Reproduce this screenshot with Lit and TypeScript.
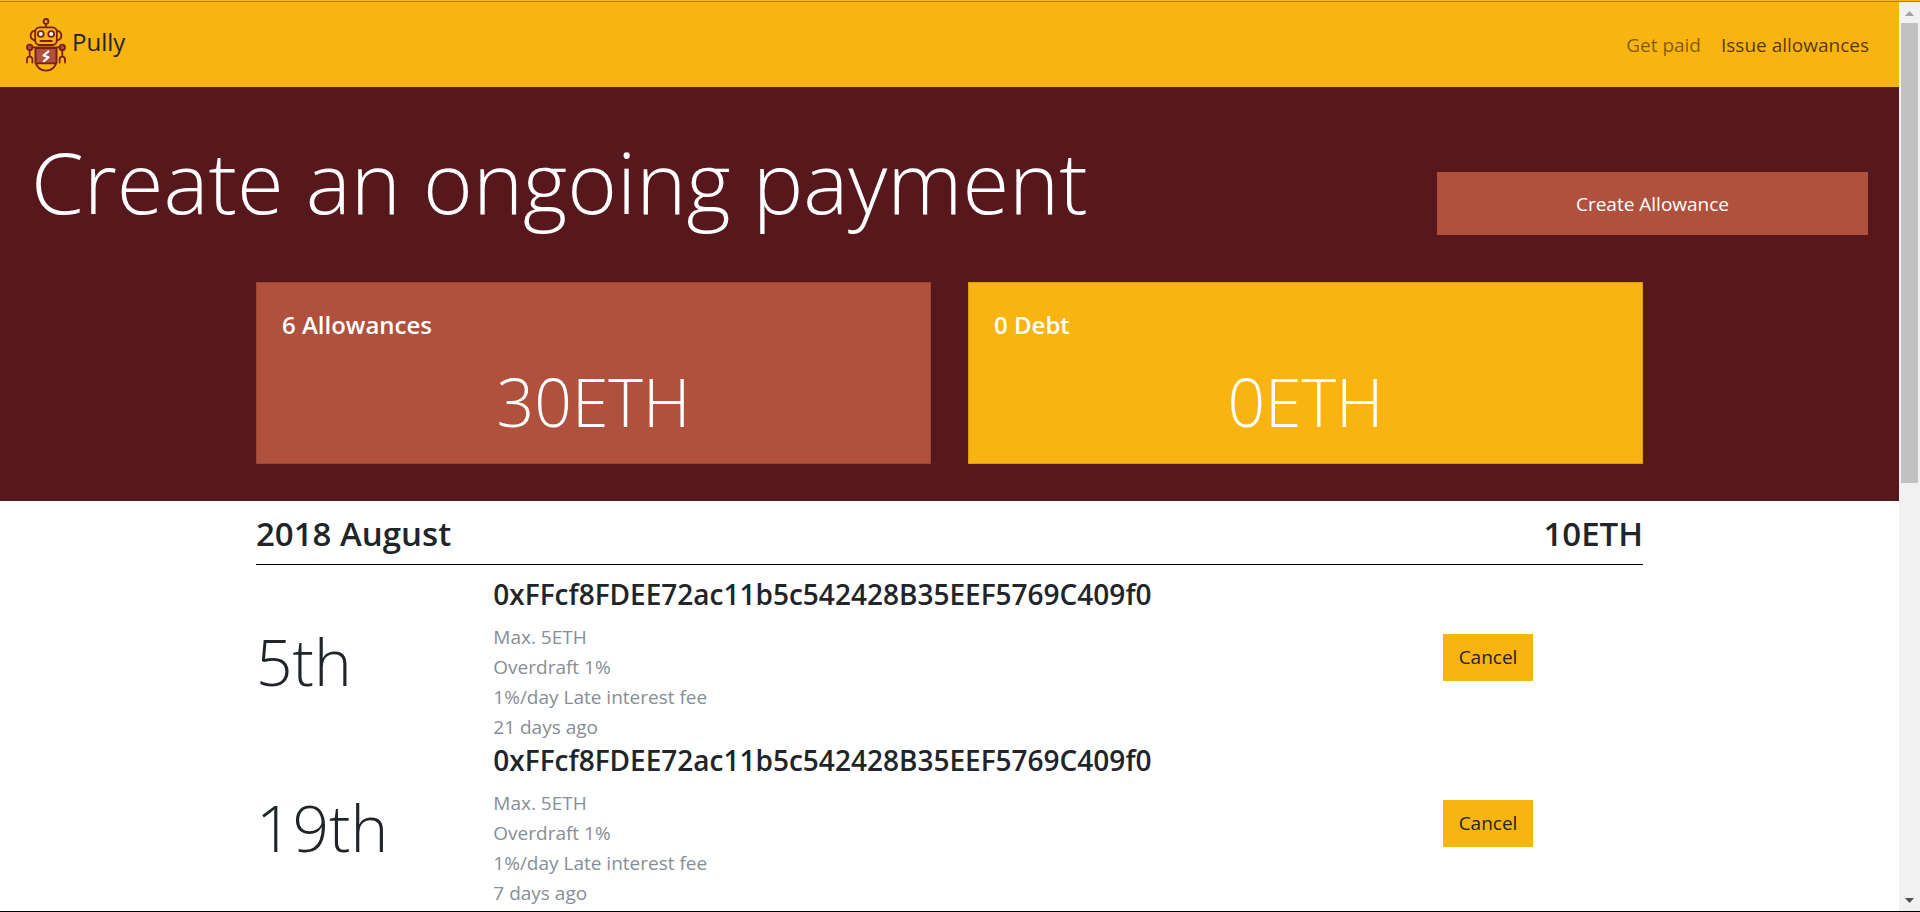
import { LitElement, html, css } from "lit";
import { customElement, property } from "lit/decorators.js";

const palette = css`
  :host {
    --gold: #f9b411;
    --wine: #56171d;
    --rust: #b0513d;
    --ink: #212529;
    --muted: #868e96;
    box-sizing: border-box;
  }
  * {
    box-sizing: border-box;
  }
`;

interface Allowance {
  day: string;
  address: string;
  max: string;
  overdraft: string;
  fee: string;
  when: string;
}

const ADDRESS = "0xFFcf8FDEE72ac11b5c542428B35EEF5769C409f0";

const ALLOWANCES: Allowance[] = [
  { day: "5th", address: ADDRESS, max: "Max. 5ETH", overdraft: "Overdraft 1%", fee: "1%/day Late interest fee", when: "21 days ago" },
  { day: "19th", address: ADDRESS, max: "Max. 5ETH", overdraft: "Overdraft 1%", fee: "1%/day Late interest fee", when: "7 days ago" },
];

@customElement("pully-logo")
export class PullyLogo extends LitElement {
  static styles = css`
    :host {
      display: block;
    }
    .robot {
      display: block;
      width: 40px;
      height: 54px;
    }
  `;

  render() {
    return html`
      <svg class="robot" viewBox="0 0 40 54" fill="none" stroke="#7a1f16" stroke-width="1.8" stroke-linecap="round" stroke-linejoin="round" aria-hidden="true">
        <circle cx="20" cy="3.4" r="2.4" />
        <path d="M20 6V9.2" />
        <rect x="9.2" y="9.4" width="21.6" height="17.6" rx="4.4" />
        <path d="M9 12.6C6.2 13.2 4.6 15.4 4.6 17.6S6.2 21.8 9 22.4" />
        <path d="M31 12.6C33.8 13.2 35.4 15.4 35.4 17.6S33.8 21.8 31 22.4" />
        <circle cx="14.8" cy="16" r="2.9" fill="#fff" />
        <circle cx="25.2" cy="16" r="2.9" fill="#fff" />
        <path d="M14.4 23H25.8" />
        <path d="M6 29.4H34" />
        <path d="M9.6 30V42C9.6 48.4 13.8 52.6 20 52.6S30.4 48.4 30.4 42V30" />
        <path d="M9.6 30H30.4V45.4H9.6Z" fill="#b0513d" />
        <path d="M22.4 33.4L17.4 37.6L22.6 39.2L17.8 43.2" stroke="#fff" stroke-width="2.1" />
        <circle cx="3.7" cy="29.4" r="2.7" fill="#b0513d" />
        <circle cx="36.3" cy="29.4" r="2.7" fill="#b0513d" />
        <path d="M3.7 32.6V38.6M1 44.6V41.4C1 39.6 2 38.6 3.7 38.6S6.4 39.6 6.4 41.4V44.6" />
        <path d="M36.3 32.6V38.6M33.6 44.6V41.4C33.6 39.6 34.6 38.6 36.3 38.6S39 39.6 39 41.4V44.6" />
      </svg>
    `;
  }
}

@customElement("summary-card")
export class SummaryCard extends LitElement {
  @property() heading = "";
  @property() amount = "";
  @property({ reflect: true }) tone = "rust";

  static styles = [
    palette,
    css`
      :host {
        display: block;
        padding: 24px 25px 20px;
        border: 1px solid rgba(0, 0, 0, 0.125);
        color: #fff;
        background: var(--rust);
      }
      :host([tone="gold"]) {
        background: var(--gold);
      }
      .heading {
        margin: 0;
        font-size: 24px;
        font-weight: 600;
        line-height: 36px;
      }
      .amount {
        margin: 16px 0 0;
        font-size: 66px;
        font-weight: 300;
        line-height: 84px;
        text-align: center;
      }
    `,
  ];

  render() {
    return html`
      <h2 class="heading">${this.heading}</h2>
      <p class="amount">${this.amount}</p>
    `;
  }
}

@customElement("app-root")
export class AppRoot extends LitElement {
  static styles = [
    palette,
    css`
      :host {
        display: flex;
        flex-direction: column;
        height: 100vh;
        background: #fff;
        color: var(--ink);
        font-family: "Open Sans", "Noto Sans", sans-serif;
        font-size: 19px;
        line-height: 30px;
        border-bottom: 1px solid #000;
      }
      .edge {
        height: 2px;
        background: var(--gold);
        border-bottom: 1px solid #b07f0c;
      }
      .window {
        flex: 1;
        min-height: 0;
        display: flex;
      }
      .page {
        flex: 1;
        min-width: 0;
        overflow-y: auto;
        scrollbar-width: none;
      }
      .navbar {
        display: flex;
        justify-content: space-between;
        align-items: center;
        height: 85px;
        padding: 0 30px 0 26px;
        background: var(--gold);
      }
      .brand {
        display: flex;
        align-items: center;
        gap: 6px;
        color: #212529;
        text-decoration: none;
        font-size: 24px;
      }
      .name {
        padding-bottom: 6px;
      }
      .links {
        display: flex;
        gap: 20px;
      }
      .link {
        color: rgba(0, 0, 0, 0.7);
        text-decoration: none;
      }
      .link.dim {
        color: rgba(0, 0, 0, 0.5);
      }
      .hero {
        padding: 37px 0;
        background: var(--wine);
        color: #fff;
      }
      .intro {
        display: flex;
        justify-content: space-between;
        align-items: flex-start;
        padding: 0 31px;
        margin-bottom: 44px;
      }
      .title {
        margin: 0;
        font-size: 85px;
        font-weight: 300;
        line-height: 114px;
      }
      .create {
        width: 431px;
        height: 63px;
        margin-top: 48px;
        border: 0;
        background: var(--rust);
        color: #fff;
        font: inherit;
      }
      .container {
        max-width: 1387px;
        margin: 0 auto;
      }
      .cards {
        display: grid;
        grid-template-columns: 1fr 1fr;
        gap: 37px;
      }
      .month {
        display: flex;
        justify-content: space-between;
        padding: 12px 0 9px;
        border-bottom: 1px solid #000;
        margin-bottom: 11px;
      }
      .month-text {
        margin: 0;
        font-size: 33px;
        font-weight: 600;
        line-height: 42px;
      }
      .row {
        display: grid;
        grid-template-columns: repeat(12, 1fr);
        column-gap: 37px;
        align-items: center;
      }
      .day {
        grid-column: span 2;
        padding-top: 6px;
        font-size: 64px;
        font-weight: 300;
        line-height: 84px;
      }
      .details {
        grid-column: span 8;
      }
      .address {
        margin: 0 0 10px;
        font-size: 28px;
        font-weight: 600;
        line-height: 36px;
      }
      .line {
        margin: 0;
        color: var(--muted);
      }
      .action {
        grid-column: span 2;
        padding-bottom: 4px;
      }
      .cancel {
        height: 47px;
        padding: 0 16px;
        border: 0;
        background: var(--gold);
        color: var(--ink);
        font: inherit;
      }
      .scrollbar {
        width: 21px;
        display: flex;
        flex-direction: column;
        background: #f1f1f1;
      }
      .arrow {
        display: block;
        width: 21px;
        height: 21px;
      }
      .track {
        flex: 1;
        padding: 0 2px;
      }
      .thumb {
        height: 53%;
        background: #c1c1c1;
      }
    `,
  ];

  private renderAllowance(a: Allowance) {
    return html`
      <article class="row">
        <div class="day">${a.day}</div>
        <div class="details">
          <h3 class="address">${a.address}</h3>
          <p class="line">${a.max}</p>
          <p class="line">${a.overdraft}</p>
          <p class="line">${a.fee}</p>
          <p class="line">${a.when}</p>
        </div>
        <div class="action"><button class="cancel" type="button">Cancel</button></div>
      </article>
    `;
  }

  render() {
    return html`
      <div class="edge"></div>
      <div class="window">
        <div class="page">
          <nav class="navbar">
            <a class="brand" href="#"><pully-logo></pully-logo><span class="name">Pully</span></a>
            <div class="links">
              <a class="link dim" href="#paid">Get paid</a>
              <a class="link" href="#issue">Issue allowances</a>
            </div>
          </nav>
          <header class="hero">
            <div class="intro">
              <h1 class="title">Create an ongoing payment</h1>
              <button class="create" type="button">Create Allowance</button>
            </div>
            <div class="container cards">
              <summary-card heading="6 Allowances" amount="30ETH" tone="rust"></summary-card>
              <summary-card heading="0 Debt" amount="0ETH" tone="gold"></summary-card>
            </div>
          </header>
          <main class="container">
            <div class="month">
              <h2 class="month-text">2018 August</h2>
              <p class="month-text">10ETH</p>
            </div>
            ${ALLOWANCES.map((a) => this.renderAllowance(a))}
          </main>
        </div>
        <div class="scrollbar" aria-hidden="true">
          <svg class="arrow" viewBox="0 0 21 21"><path d="M6 14L10.5 9L15 14Z" fill="#a3a3a3" /></svg>
          <div class="track"><div class="thumb"></div></div>
          <svg class="arrow" viewBox="0 0 21 21"><path d="M6 8L10.5 13L15 8Z" fill="#505050" /></svg>
        </div>
      </div>
    `;
  }
}
